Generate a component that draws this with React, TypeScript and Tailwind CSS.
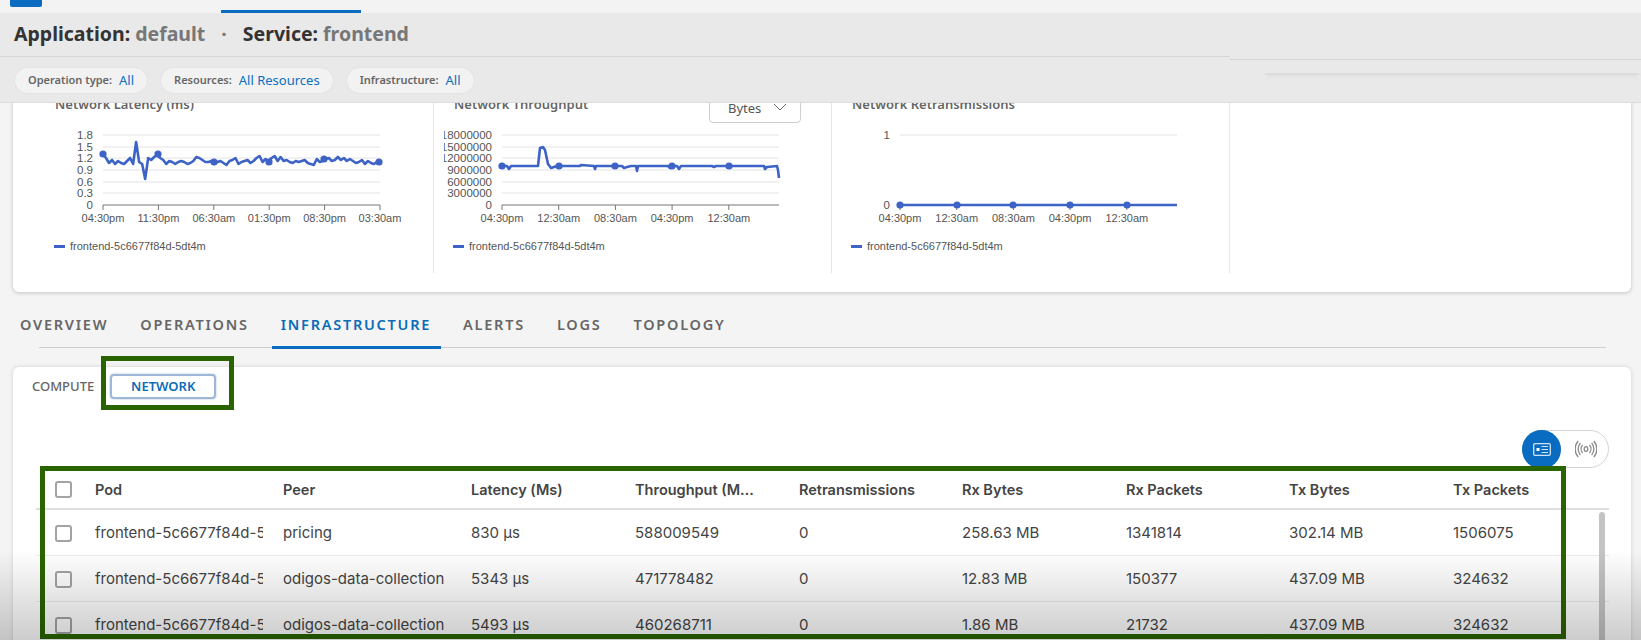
import React from "react"

const latency = [
  34, 38, 43, 40, 44, 41, 43, 44, 41, 38, 44, 22, 42, 44, 59, 38, 40, 37, 35, 38,
  40, 44, 41, 42, 44, 42, 41, 42, 44, 43, 41, 37, 38, 40, 42, 42, 41, 44, 42, 41,
  43, 45, 41, 40, 38, 44, 42, 41, 40, 43, 41, 38, 36, 42, 39, 41, 38, 36, 41, 37,
  41, 40, 42, 43, 41, 42, 41, 40, 43, 44, 45, 39, 42, 41, 39, 38, 41, 40, 37, 40,
  38, 41, 39, 41, 43, 42, 40, 44, 41, 43, 44, 42, 41,
]

const throughput: [number, number][] = [
  [0, 46], [5, 46], [7, 49], [9, 46], [36, 46], [38, 28], [41, 27], [43, 30], [46, 44], [49, 48], [52, 47], [55, 46],
  [78, 46], [79, 45], [92, 46], [93, 49], [94, 46], [120, 46], [122, 48], [125, 47], [129, 46], [134, 46], [135, 51],
  [136, 46], [166, 46], [168, 48], [171, 46], [175, 46], [177, 49], [179, 46], [210, 46], [212, 47], [214, 46], [262, 46],
  [263, 49], [265, 47], [275, 46], [276, 50], [277, 58],
]

type ChartProps = {
  left: number
  width: number
  title: string
  yLabels: [string, number][]
  xLabels: string[]
  xStep: number
  points: string
  dots: [number, number][]
}

function Chart({ left, width, title, yLabels, xLabels, xStep, points, dots }: ChartProps) {
  return (
    <div className="h-[182px] shrink-0 overflow-hidden border-r border-[#e6e6e6]" style={{ width }}>
      <div
        className="pt-[3px] text-[13px] font-semibold leading-5 whitespace-nowrap text-[#666] font-['Noto_Sans',sans-serif]"
        style={{ paddingLeft: left - 48 }}
      >
        {title}
      </div>
      <svg width={width} height={112} className="mt-[6px] block font-['Liberation_Sans',sans-serif]">
        <defs>
          <clipPath id={`labels-${left}-${width}`}>
            <rect x={10} y={0} width={width} height={112} />
          </clipPath>
        </defs>
        {yLabels.map(([label, y]) => (
          <g key={label}>
            {y !== 85 && <line x1={left} x2={left + 277} y1={y} y2={y} stroke="#ececec" strokeWidth="1.5" />}
            <text
              x={left - 10}
              y={y + 4}
              textAnchor="end"
              fontSize="11.5"
              fill="#555"
              clipPath={`url(#labels-${left}-${width})`}
            >
              {label}
            </text>
          </g>
        ))}
        <line x1={left} x2={left + 277} y1={85} y2={85} stroke="#777" />
        {xLabels.map((label, i) => (
          <g key={i}>
            <line x1={left + i * xStep} x2={left + i * xStep} y1={85} y2={90} stroke="#777" />
            <text x={left + i * xStep} y={102} textAnchor="middle" fontSize="11" fill="#555">
              {label}
            </text>
          </g>
        ))}
        <polyline points={points} fill="none" stroke="#3d63c6" strokeWidth="2.6" strokeLinejoin="round" />
        {dots.map(([x, y]) => (
          <circle key={x} cx={left + x} cy={y} r="3.6" fill="#3d63c6" />
        ))}
      </svg>
      <div className="mt-[6px] flex items-center gap-[5px]" style={{ paddingLeft: left - 49 }}>
        <span className="h-[3px] w-[11px] bg-[#3d63c6]" />
        <span className="text-[11px] leading-4 text-[#555] font-['Liberation_Sans',sans-serif]">
          frontend-5c6677f84d-5dt4m
        </span>
      </div>
    </div>
  )
}

function Chip({ label, value }: { label: string; value: string }) {
  return (
    <div className="flex h-[25px] items-center gap-[7px] rounded-full bg-[#f2f2f2] px-[13px] shadow-[0_0_2px_rgba(0,0,0,0.08)]">
      <span className="text-[11px] font-semibold text-[#666]">{label}</span>
      <span className="text-[13px] text-[#0a6fc2]">{value}</span>
    </div>
  )
}

const columns = "grid grid-cols-[59px_188px_188px_164px_164px_163px_164px_163px_164px_92px] items-center"

const rows = [
  ["pricing", "830 µs", "588009549", "0", "258.63 MB", "1341814", "302.14 MB", "1506075"],
  ["odigos-data-collection", "5343 µs", "471778482", "0", "12.83 MB", "150377", "437.09 MB", "324632"],
  ["odigos-data-collection", "5493 µs", "460268711", "0", "1.86 MB", "21732", "437.09 MB", "324632"],
]

function Checkbox() {
  return <div className="ml-[19px] h-[17px] w-[17px] rounded-[3px] border-2 border-[#a3a3a3] bg-white" />
}

export default function App() {
  const latencyLine = latency
    .map((y, i) => `${90 + (i * 277) / (latency.length - 1)},${y}`)
    .join(" ")
  const throughputLine = throughput.map(([x, y]) => `${68 + x},${y}`).join(" ")

  return (
    <div className="relative flex h-[640px] w-[1641px] flex-col overflow-hidden bg-[#f4f4f4] font-['Noto_Sans',sans-serif]">
      <header className="relative z-10 h-[103px] shrink-0 border-b border-[#dcdcdc] bg-[#e9e9e9]">
        <div className="relative h-[13px] bg-[#f3f3f3]">
          <div className="absolute left-[10px] top-0 h-[7px] w-[32px] rounded-b-[2px] bg-[#0a6cc0]" />
          <div className="absolute left-[221px] top-[10px] h-[3px] w-[140px] bg-[#0a6cc0]" />
        </div>
        <div className="flex h-[43px] w-[1230px] items-center gap-[5px] pb-[2px] pl-[14px] text-[19.5px] font-bold leading-none">
          <span className="text-[#333]">Application:</span>
          <span className="text-[#777]">default</span>
          <span className="mx-[11px] text-[#777]">·</span>
          <span className="text-[#333]">Service:</span>
          <span className="text-[#777]">frontend</span>
        </div>
        <div className="h-px w-[1230px] bg-[#d6d6d6]" />
        <div className="flex gap-[14px] pl-[15px] pt-[11px]">
          <Chip label="Operation type:" value="All" />
          <Chip label="Resources:" value="All Resources" />
          <Chip label="Infrastructure:" value="All" />
        </div>
        <div className="absolute left-[1230px] right-0 top-[13px] h-[47px] border-b border-[#d6d6d6]" />
        <div className="absolute left-[1263px] right-0 top-[60px] h-[13px] shadow-[0_4px_4px_-2px_rgba(0,0,0,0.08)]" />
      </header>

      <section className="relative mx-[13px] -mt-[12px] h-[201px] w-[1618px] shrink-0 rounded-b-[6px] bg-white shadow-[0_1px_4px_rgba(0,0,0,0.2)]">
        <div className="flex">
          <Chart
            left={90}
            width={421}
            title="Network Latency (ms)"
            yLabels={[["1.8", 15], ["1.5", 27], ["1.2", 38], ["0.9", 50], ["0.6", 62], ["0.3", 73], ["0", 85]]}
            xLabels={["04:30pm", "11:30pm", "06:30am", "01:30pm", "08:30pm", "03:30am"]}
            xStep={55.4}
            points={latencyLine}
            dots={[[0, 34], [55, 34], [111, 42], [166, 42], [221, 39], [276, 42]]}
          />
          <Chart
            left={68}
            width={398}
            title="Network Throughput"
            yLabels={[["18000000", 15], ["15000000", 27], ["12000000", 38], ["9000000", 50], ["6000000", 62], ["3000000", 73], ["0", 85]]}
            xLabels={["04:30pm", "12:30am", "08:30am", "04:30pm", "12:30am"]}
            xStep={56.7}
            points={throughputLine}
            dots={[[0, 46], [57, 46], [113, 46], [170, 46], [227, 46]]}
          />
          <Chart
            left={68}
            width={398}
            title="Network Retransmissions"
            yLabels={[["1", 15], ["0", 85]]}
            xLabels={["04:30pm", "12:30am", "08:30am", "04:30pm", "12:30am"]}
            xStep={56.7}
            points="68,85 345,85"
            dots={[[0, 85], [57, 85], [113, 85], [170, 85], [227, 85]]}
          />
        </div>
        <div className="absolute left-[696px] top-[-3px] flex h-[35px] w-[92px] items-end justify-between rounded-b-[4px] border border-[#cfcfcf] bg-white pb-[4px] pl-[18px] pr-[13px] text-[13px] text-[#555]">
          <span>Bytes</span>
          <svg width="14" height="8" viewBox="0 0 14 8" className="mb-[7px]">
            <polyline points="1,1 7,7 13,1" fill="none" stroke="#666" strokeWidth="1" />
          </svg>
        </div>
      </section>

      <nav className="relative mx-[20px] flex h-[55px] shrink-0 gap-[32px] pt-[20px] text-[14.5px] font-semibold leading-6 tracking-[1.75px] text-[#666]">
        <span>OVERVIEW</span>
        <span>OPERATIONS</span>
        <span className="relative text-[#0a6cb8]">
          INFRASTRUCTURE
          <span className="absolute -left-[9px] -right-[10px] top-[34px] h-[3px] bg-[#0a6cc0]" />
        </span>
        <span>ALERTS</span>
        <span>LOGS</span>
        <span>TOPOLOGY</span>
      </nav>
      <div className="ml-[39px] h-[1px] w-[1567px] shrink-0 bg-[#d0d0d0]" />

      <section className="mx-[13px] mt-[19px] w-[1618px] flex-1 rounded-t-[6px] bg-white pl-[23px] pr-[22px] pt-[7px] shadow-[0_0_4px_rgba(0,0,0,0.15)]">
        <div className="-ml-[4px] flex h-[25px] items-center gap-[16px]">
          <span className="text-[13px] font-medium text-[#666]">COMPUTE</span>
          <div className="relative flex h-[25px] w-[106px] items-center justify-center rounded-[4px] border-2 border-[#9db8d6] text-[13px] font-semibold text-[#0a6cb8] shadow-[0_0_2px_rgba(70,110,160,0.5)]">
            NETWORK
            <div className="absolute -bottom-[13px] -left-[11px] -right-[20px] -top-[20px] border-[5px] border-[#2a6400]" />
          </div>
        </div>

        <div className="mt-[31px] flex justify-end">
          <div className="flex h-[38px] w-[87px] items-center rounded-full border border-[#d4d4d4] bg-white">
            <div className="-ml-px flex h-[39px] w-[39px] items-center justify-center rounded-full bg-[#0a6cc0]">
              <svg width="18" height="13" viewBox="0 0 18 13" fill="none">
                <rect x="0.7" y="0.7" width="16.6" height="11.6" rx="1.2" stroke="#cfe2f5" strokeWidth="1.3" />
                <rect x="3.5" y="5" width="3" height="3" fill="#fff" />
                <path d="M8.5 3.5h6.5M8.5 6.5h6.5M8.5 9.5h6.5" stroke="#cfe2f5" strokeWidth="1" />
              </svg>
            </div>
            <svg width="22" height="22" viewBox="0 0 22 22" fill="none" stroke="#8a8a8a" strokeWidth="1.3" className="ml-[14px]">
              <ellipse cx="11" cy="11" rx="1.8" ry="2.4" />
              <path d="M7.6 7a6 6 0 0 0 0 8M14.4 7a6 6 0 0 1 0 8M5.4 5a9 9 0 0 0 0 12M16.6 5a9 9 0 0 1 0 12M3.2 3a12 12 0 0 0 0 16M18.8 3a12 12 0 0 1 0 16" />
            </svg>
          </div>
        </div>

        <div className="relative mt-[3px] font-['Inter',sans-serif]">
          <div className={`${columns} h-[39px] border-b-2 border-[#dedede] text-[14.5px] font-semibold text-[#444]`}>
            <Checkbox />
            <span>Pod</span>
            <span>Peer</span>
            <span>Latency (Ms)</span>
            <span className="w-[120px] truncate">Throughput (Mbps)</span>
            <span>Retransmissions</span>
            <span>Rx Bytes</span>
            <span>Rx Packets</span>
            <span>Tx Bytes</span>
            <span>Tx Packets</span>
          </div>
          {rows.map((row, i) => (
            <div key={i} className={`${columns} h-[46px] border-b border-[#ececec] pt-[2px] text-[15px] text-[#444]`}>
              <Checkbox />
              <span className="w-[168px] overflow-hidden whitespace-nowrap">frontend-5c6677f84d-5dt4m</span>
              {row.map((cell, j) => (
                <span key={j}>{cell}</span>
              ))}
            </div>
          ))}
          <div className="absolute -top-[5px] left-[4px] h-[173px] w-[1526px] border-[5px] border-[#2a6400]" />
          <div className="absolute left-[1563px] top-[41px] h-[140px] w-[6px] rounded-full bg-[#c4c4c4]" />
        </div>
      </section>

      <div className="pointer-events-none absolute inset-x-0 bottom-0 z-20 h-[90px] bg-gradient-to-b from-transparent to-black/20" />
    </div>
  )
}
